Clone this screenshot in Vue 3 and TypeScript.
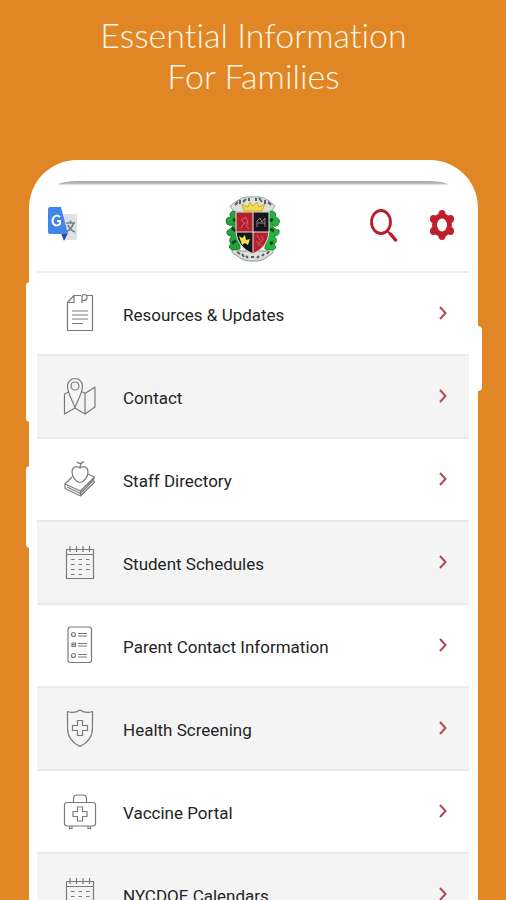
<script setup lang="ts">
type IconName = 'document' | 'map' | 'books' | 'calendar' | 'list' | 'shield' | 'medkit'

interface MenuItem {
  label: string
  icon: IconName
}

const items: MenuItem[] = [
  { label: 'Resources & Updates', icon: 'document' },
  { label: 'Contact', icon: 'map' },
  { label: 'Staff Directory', icon: 'books' },
  { label: 'Student Schedules', icon: 'calendar' },
  { label: 'Parent Contact Information', icon: 'list' },
  { label: 'Health Screening', icon: 'shield' },
  { label: 'Vaccine Portal', icon: 'medkit' },
  { label: 'NYCDOE Calendars', icon: 'calendar' },
]

const icons: Record<IconName, string> = {
  document:
    'M14 2.5H21M27 2.500H32.500V37.500H7.500V9.500L14 2.500V9.500H7.500M22 10V4.500Q22 1.500 24.500 1.500Q27.500 2 27 5Q26 8 22.500 7.500M12 18H28M12 22H28M12 26H28M12 30.500H23',
  map:
    'M15 32C14 27 7.500 18 7.500 10A7.500 7.500 0 0 1 22.500 10C22.500 18 16 27 15 32ZM15 6A4 4 0 1 0 15 14A4 4 0 1 0 15 6M8.500 16L4.500 18V38L15 32L25 38L35 31V11L25 17.500L21 15M25 17.500V38',
  books:
    'M20 9C16 6 12 8 12 13C12 18 16 23 20 23.500C24 23 28 18 28 13C28 8 24 6 20 9ZM20 9Q20 5 22 4M17 3Q20 6 24 2.500M12 18L5 25L20.500 32L34.500 18L28 15M5 25V29.500L20.500 37L34.500 23L33 21.500L34.500 18M20.500 32V37M7 28L20.500 34.500L32.500 22',
  calendar:
    'M6.500 7.500H33.500V36.500H6.500ZM6.500 12.500H33.500M10 4V10M16.500 4V10M23 4V10M29.500 4V10M11 17.500H14.500M18.500 17.500H22M26 17.500H29.500M11 22.500H14.500M18.500 22.500H22M26 22.500H29.500M11 27.500H14.500M18.500 27.500H22M26 27.500H29.500M11 32.500H14.500M18.500 32.500H22',
  list:
    'M10.500 2H29Q31.500 2 31.500 4.500V35Q31.500 37.500 29 37.500H10.500Q8 37.500 8 35V4.500Q8 2 10.500 2ZM13.500 7.500A2 2 0 1 0 13.500 11.500A2 2 0 1 0 13.500 7.500M18 8.500H27M18 11H27M12 18H15.500V21.500H12ZM12 19.700H15.500M18 18.500H27M18 21H27M13.500 28.500A2 2 0 1 0 13.500 32.500A2 2 0 1 0 13.500 28.500M18 29.500H27M18 32H27',
  shield:
    'M7.500 3.500Q14 6 20 2Q26 6 32.500 3.500V20C32.500 29 27 35 20 38.500C13 35 7.500 29 7.500 20ZM17.500 12.500H22.500V17.500H27.500V22.500H22.500V27.500H17.500V22.500H12.500V17.500H17.500Z',
  medkit:
    'M7 11.500H33Q35.500 11.500 35.500 14V32.500Q35.500 35 33 35H7Q4.500 35 4.500 32.500V14Q4.500 11.500 7 11.500ZM13.500 11.500V7.500Q13.500 4 17 4H23Q26.500 4 26.500 7.500V11.500M9.500 35.500V37.500H12V35.500M28 35.500V37.500H30.500V35.500M17.500 16H22.500V20.500H27V25.500H22.500V30H17.500V25.500H13V20.500H17.500Z',
}
</script>

<template>
  <main class="promo">
    <h1 class="headline">Essential Information<br />For Families</h1>

    <section class="phone">
      <span class="side-button volume-up"></span>
      <span class="side-button volume-down"></span>
      <span class="side-button power"></span>

      <div class="screen">
        <div class="bezel"></div>
        <header class="toolbar">
          <button class="tool" type="button" aria-label="Translate">
            <svg width="30" height="36" viewBox="0 0 30 36">
              <path d="M12 7H27Q29 7 29 9V31Q29 33 27 33H17Z" fill="#dfe0e2" />
              <path d="M18 16H27M22.500 13.500V16M25.500 16Q24 22 18 25M20 18Q22 23 27 25" fill="none" stroke="#6e8585" stroke-width="1.700" />
              <path d="M13 26H20L16 34Z" fill="#3046a5" />
              <path d="M2 0H13L20 27H2Q0 27 0 25V2Q0 0 2 0Z" fill="#4285e8" />
              <path d="M12 10Q8 7 5.500 10.500Q3.500 14 5.500 17Q8.500 20 12 17V14H9" fill="none" stroke="#fff" stroke-width="2" />
            </svg>
          </button>

          <svg class="crest" width="58" height="68" viewBox="0 -1 58 68">
            <path d="M8 11Q20 0 31 2Q43 0 53 11L49 17H12Z" fill="#dde1de" stroke="#9aa19c" />
            <path d="M11 54Q8 58 14 60Q22 67 31 66Q40 67 48 60Q53 57 50 53L44 56H17Z" fill="#dce0dd" stroke="#8a938d" />
            <path d="M12 16Q6 17 9 22Q2 22 5 29Q9 32 12 29Q10 34 5 36Q4 41 10 41Q6 45 9 49Q5 52 10 55L18 54L17 20Z" fill="#23a43a" stroke="#1f7a33" />
            <path d="M49 16Q56 17 53 22Q60 24 56 30Q52 33 50 29Q51 35 57 35Q58 41 52 41Q57 46 52 49Q56 54 50 55L43 54L44 20Z" fill="#22b43c" stroke="#1f8a36" />
            <path d="M11 24L14 26M10 33L14 36M10 48L14 46M51 24L48 26M52 36L48 34M51 47L48 49" stroke="#123d1d" stroke-width="3" />
            <path d="M14 17H31V37H14Z" fill="#b51f2e" />
            <path d="M31 17H47V37H31Z" fill="#171519" />
            <path d="M14 37H31V59Q15 52 14 37Z" fill="#171519" />
            <path d="M31 37H47Q46 52 31 59Z" fill="#b51f2e" />
            <path d="M14 17H47V37Q46 52 31 59Q15 52 14 37ZM31 17V58M14 37H47" fill="none" stroke="#e8e3e0" />
            <path d="M19 33L22 28L19 25L24 22L26 28L24 31L27 34M22 28H26" fill="none" stroke="#d0606c" />
            <path d="M35 32V26L38 23L40 27L43 23V32M35 28H43" fill="none" stroke="#8a8588" />
            <path d="M17 41L20 43L23 40L24 45L28 44L26 50L23 48L20 50Z" fill="#eae34c" />
            <path d="M36 51Q37 46 39 47Q43 43 39 41M34 46L40 51M35 40L38 45" fill="none" stroke="#d0606c" />
            <path d="M22 16L20 9L26 12L28 7L31 11L35 7L37 12L43 9L40 16Z" fill="#f0dc48" stroke="#c9ae35" />
            <path d="M13 10L16 7M18 9V5M21 7L24 4M27 3V6M34 3V6M37 3L40 7M43 5V9M46 7L49 10" stroke="#59605c" stroke-width="2" />
            <path d="M15 57L18 59M20 59L22 62M24 61L26 63M29 62H32M35 63L37 61M40 61L42 59M45 59L47 56" stroke="#555d58" stroke-width="2" />
          </svg>

          <div class="tools">
            <button class="tool" type="button" aria-label="Search">
              <svg width="28" height="34" viewBox="0 0 28 34" fill="none" stroke="#b91e2a">
                <ellipse cx="11" cy="14" rx="9.500" ry="11.500" stroke-width="2.800" />
                <path d="M17 22.500L20 26" stroke-width="2" />
                <path d="M20.500 26L25.500 32" stroke-width="3.500" stroke-linecap="round" />
              </svg>
            </button>
            <button class="tool" type="button" aria-label="Settings">
              <svg width="24" height="30" viewBox="0 0 24 30" fill="#c01f2c">
                <ellipse cx="12" cy="15" rx="10" ry="12" />
                <ellipse cx="12" cy="4" rx="3.500" ry="4" />
                <ellipse cx="12" cy="26" rx="3.500" ry="4" />
                <ellipse cx="3.500" cy="9" rx="3.500" ry="4" />
                <ellipse cx="20.500" cy="9" rx="3.500" ry="4" />
                <ellipse cx="3.500" cy="21" rx="3.500" ry="4" />
                <ellipse cx="20.500" cy="21" rx="3.500" ry="4" />
                <ellipse cx="12" cy="15" rx="5" ry="6.500" fill="#fff" />
              </svg>
            </button>
          </div>
        </header>

        <nav class="menu">
          <a v-for="item in items" :key="item.label" class="row" href="#">
            <svg class="row-icon" width="40" height="40" viewBox="0 0 40 40">
              <path :d="icons[item.icon]" />
            </svg>
            <span class="row-label">{{ item.label }}</span>
            <svg class="chevron" width="10" height="16" viewBox="0 0 10 16">
              <path d="M2 2L7.500 8L2 14" />
            </svg>
          </a>
        </nav>
      </div>
    </section>
  </main>
</template>

<style>
body {
  margin: 0;
}
</style>

<style scoped>
.promo {
  box-sizing: border-box;
  height: 100vh;
  overflow: hidden;
  padding: 14px 28px 0 29px;
  background: #e18625;
}

.headline {
  margin: 0;
  height: 146px;
  color: #fff6e6;
  font-family: Lato, sans-serif;
  font-size: 34px;
  font-weight: 300;
  font-variant-ligatures: none;
  line-height: 41px;
  text-align: center;
}

.phone {
  position: relative;
  box-sizing: border-box;
  padding: 21px 9px 0 8px;
  border-radius: 48px 48px 0 0;
  background: #fff;
}

.side-button {
  position: absolute;
  width: 4px;
  background: #fff;
}

.volume-up,
.volume-down {
  left: -3px;
  border-radius: 4px 0 0 4px;
}

.volume-up {
  top: 122px;
  height: 140px;
}

.volume-down {
  top: 306px;
  height: 82px;
}

.power {
  top: 166px;
  right: -4px;
  height: 65px;
  border-radius: 0 4px 4px 0;
}

.bezel {
  height: 4px;
  margin: 0 21px;
  border-radius: 20px 20px 0 0 / 4px 4px 0 0;
  background: linear-gradient(#a5a5a7, #b9b9bb 60%, #eeeeee);
}

.toolbar {
  display: grid;
  grid-template-columns: 1fr auto 1fr;
  align-items: center;
  box-sizing: border-box;
  height: 86px;
  padding: 0 15px 0 11px;
}

.tools {
  display: flex;
  justify-content: flex-end;
  align-items: center;
  gap: 32px;
}

.tool {
  justify-self: start;
  padding: 0 0 6px;
  border: 0;
  background: none;
}

.tool svg,
.crest {
  display: block;
}

.row {
  display: flex;
  align-items: center;
  gap: 23px;
  box-sizing: border-box;
  height: 83px;
  padding: 0 21px 2px 23px;
  border-top: 2px solid #e8ebeb;
  background: #fff;
  color: #242424;
  text-decoration: none;
}

.row:nth-child(even) {
  background: #f4f4f4;
}

.row-icon {
  flex: none;
  fill: none;
  stroke: #7a7a7a;
  stroke-width: 1.2;
  stroke-linejoin: round;
}

.row-label {
  flex: 1;
  padding-top: 4px;
  font-family: Roboto, sans-serif;
  font-size: 17px;
  line-height: 24px;
}

.chevron {
  flex: none;
  fill: none;
  stroke: #b84654;
  stroke-width: 2;
}
</style>
